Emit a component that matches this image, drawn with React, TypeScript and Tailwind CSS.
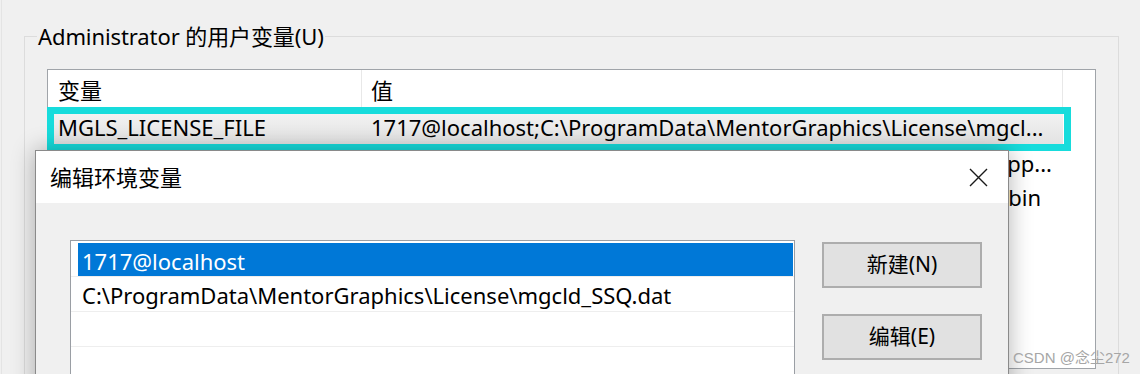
import React from "react";

const FONT = "font-['Noto_Sans','Noto_Sans_CJK_SC',sans-serif]";

function CloseIcon() {
  return (
    <svg width="19" height="19" viewBox="0 0 19 19" fill="none">
      <path d="M1 1 L18 18 M18 1 L1 18" stroke="#1a1a1a" strokeWidth="1.4" />
    </svg>
  );
}

export default function App() {
  return (
    <div className={`relative w-[1140px] h-[374px] overflow-hidden bg-[#f0f0f0] text-black ${FONT}`}>
      <div className="ml-px h-full border-l border-[#e4e4e4] pt-[36px]">
        {/* Group box */}
        <div className="ml-[22px] h-[400px] w-[1095px] border border-[#dcdcdc]">
          <div className="-mt-[15px] ml-[12px] w-fit bg-[#f0f0f0] px-px text-[22px] leading-[28px] tracking-[-0.1px]">
            Administrator 的用户变量(U)
          </div>
          {/* Outer list */}
          <div className="relative mt-[19px] ml-[22px] h-[300px] w-[1049px] border border-[#a0a4a9] bg-white text-[22px]">
            <div className="flex h-[41px] items-center">
              <div className="w-[313px] pl-[10px]">变量</div>
              <div className="h-full w-px bg-[#e8e8e8]" />
              <div className="w-[700px] pl-[9px]">值</div>
              <div className="h-full w-px bg-[#e8e8e8]" />
            </div>
            <div className="flex h-[33px] w-[1015px] items-center bg-gradient-to-b from-[#f3f3f3] to-[#e3e3e3]">
              <div className="w-[314px] whitespace-nowrap pl-[10px]">MGLS_LICENSE_FILE</div>
              <div className="w-[700px] overflow-hidden whitespace-nowrap pl-[9px]">
                1717@localhost;C:\ProgramData\MentorGraphics\License\mgcl...
              </div>
            </div>
            <div className="flex h-[35px] items-center pt-[3px]">
              <div className="w-[314px]" />
              <div className="flex w-[700px] justify-end overflow-hidden whitespace-nowrap pr-[10px]">
                \WindowsApp...
              </div>
            </div>
            <div className="flex h-[34px] items-center pt-[3px]">
              <div className="w-[314px]" />
              <div className="flex w-[700px] justify-end overflow-hidden whitespace-nowrap pr-[21px]">
                \win64\bin
              </div>
            </div>
            {/* cyan annotation box */}
            <div className="absolute left-[-1px] top-[37px] h-[44px] w-[1024px] border-[7px] border-[#17dcdc]" />
          </div>
        </div>
      </div>

      {/* Dialog */}
      <div className="absolute left-[35px] top-[150px] h-[300px] w-[974px] border border-[#8a8a8a] bg-[#f0f0f0] shadow-[0_0_22px_rgba(0,0,0,0.3)]">
        <div className="flex h-[52px] items-center justify-between bg-white pl-[14px] pr-[20px]">
          <div className="text-[22px]">编辑环境变量</div>
          <CloseIcon />
        </div>
        <div className="flex items-start pl-[34px]">
          <div className="mt-[37px] h-[200px] w-[725px] border border-[#9a9ea4] bg-white pt-[2px] text-[22px]">
            <div className="h-[34px] border-b border-[#eeeeee] pl-[7px] pr-px">
              <div className="flex h-[33px] items-center bg-[#0078d7] pl-[4px] pt-[3px] text-white">1717@localhost</div>
            </div>
            <div className="flex h-[35px] items-center whitespace-nowrap border-b border-[#eeeeee] pl-[11px] pt-[2px]">
              C:\ProgramData\MentorGraphics\License\mgcld_SSQ.dat
            </div>
            <div className="h-[35px] border-b border-[#eeeeee]" />
          </div>
          <div className="ml-[27px] mt-[39px] flex flex-col gap-[26px]">
            <div className="flex h-[46px] w-[160px] items-center justify-center border-2 border-[#adadad] bg-[#e1e1e1] text-[21px]">
              新建(N)
            </div>
            <div className="flex h-[46px] w-[160px] items-center justify-center border-2 border-[#adadad] bg-[#e1e1e1] text-[21px]">
              编辑(E)
            </div>
          </div>
        </div>
      </div>

      {/* Watermark */}
      <div className="absolute left-[1013px] top-[346px] whitespace-nowrap font-['Liberation_Sans','Noto_Sans_CJK_SC',sans-serif] text-[15px] leading-[24px] text-[#a6a6a6]">
        CSDN @念尘272
      </div>
    </div>
  );
}
